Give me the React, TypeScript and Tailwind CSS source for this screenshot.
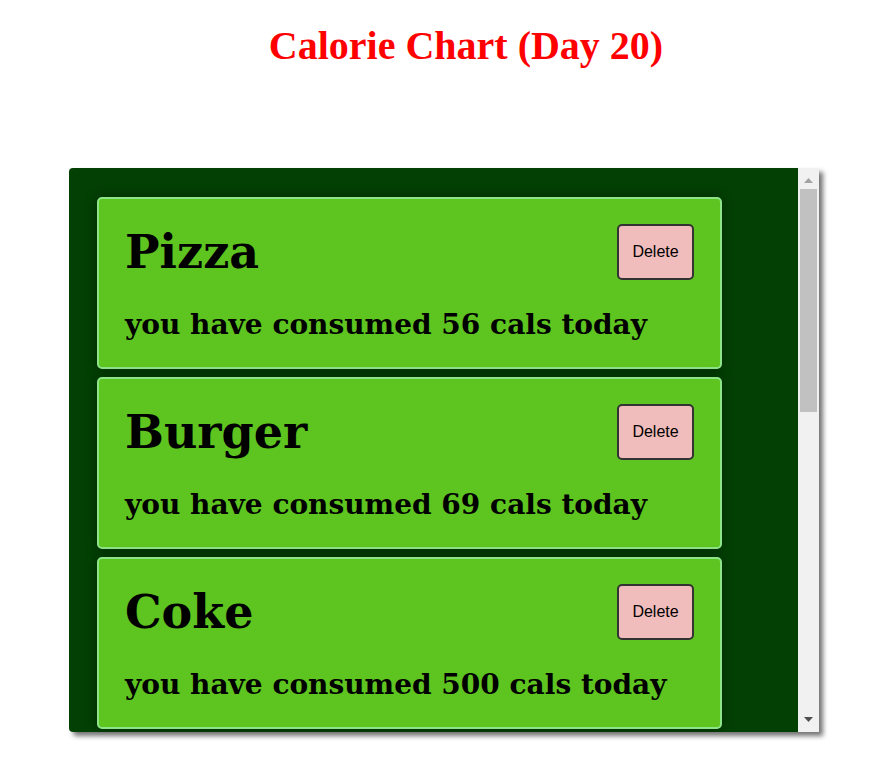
import React from "react";

const foods = [
  { name: "Pizza", cals: 56 },
  { name: "Burger", cals: 69 },
  { name: "Coke", cals: 500 },
];

function Card({ name, cals }: { name: string; cals: number }) {
  return (
    <div className="w-[625px] h-[172px] shrink-0 rounded-[5px] border-2 border-[#8de58a] bg-[#5ec41f] px-[26px] pt-[25px] shadow-[0_0_12px_rgba(0,0,0,0.35)]">
      <div className="flex h-[56px] items-center justify-between">
        <h2 className="text-[46px] leading-[52px] font-bold text-black [font-family:'DejaVu_Serif',serif]">
          {name}
        </h2>
        <button className="h-[56px] w-[77px] rounded-[5px] border-2 border-[#333] bg-[#f0bcbc] text-[16px] text-black [font-family:'Liberation_Sans',Arial,sans-serif]">
          Delete
        </button>
      </div>
      <h3 className="mt-[28px] text-[28px] leading-[34px] font-bold text-black [font-family:'DejaVu_Serif',serif]">
        you have consumed {cals} cals today
      </h3>
    </div>
  );
}

function ScrollBar() {
  return (
    <div className="flex w-[21px] shrink-0 flex-col items-center bg-[#f1f1f1]">
      <div className="mt-[4px] flex h-[17px] w-[17px] items-center justify-center">
        <svg width="9" height="5" viewBox="0 0 9 5">
          <polygon points="0,5 9,5 4.5,0" fill="#a3a3a3" />
        </svg>
      </div>
      <div className="h-[223px] w-[17px] bg-[#c1c1c1]" />
      <div className="mt-auto mb-[4px] flex h-[17px] w-[17px] items-center justify-center">
        <svg width="9" height="5" viewBox="0 0 9 5">
          <polygon points="0,0 9,0 4.5,5" fill="#505050" />
        </svg>
      </div>
    </div>
  );
}

export default function App() {
  return (
    <div className="min-h-[782px] w-[890px] bg-white">
      <h1 className="pt-[23px] pl-[42px] text-center text-[40px] leading-[46px] font-bold text-[#ff0000] [font-family:'Liberation_Serif','Times_New_Roman',serif]">
        Calorie Chart (Day 20)
      </h1>
      <div className="ml-[69px] mt-[99px] flex h-[564px] w-[750px] overflow-hidden rounded-l-[4px] shadow-[4px_4px_5px_rgba(0,0,0,0.55)]">
        <div className="flex flex-1 flex-col gap-[8px] overflow-hidden bg-[#034004] pl-[28px] pt-[29px]">
          {foods.map((f) => (
            <Card key={f.name} name={f.name} cals={f.cals} />
          ))}
        </div>
        <ScrollBar />
      </div>
    </div>
  );
}
